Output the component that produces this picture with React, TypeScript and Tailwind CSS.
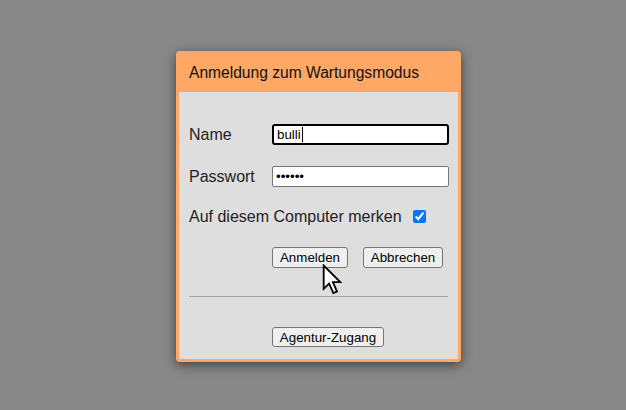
export default function App() {
  return (
    <div
      className="relative min-h-[410px] w-full bg-[#888888] pl-[176px] pt-[51px]"
      style={{ fontFamily: '"Liberation Sans", Arial, sans-serif' }}
    >
      {/* Dialog */}
      <div className="w-[285px] overflow-hidden rounded-[4px] border-[3px] border-[#ffa866] shadow-[0_3px_12px_rgba(0,0,0,0.55)]">
        {/* Header */}
        <div className="flex h-[38px] items-center bg-[#ffa866] pl-[10px] text-[15.6px] text-[#111]">
          Anmeldung zum Wartungsmodus
        </div>

        {/* Body */}
        <div className="bg-[#dedede] pb-[11px] pl-[10px] pr-[9px] pt-[32px] text-[16px] text-[#222]">
          <div className="flex h-[21px] items-center">
            <span className="w-[83px] shrink-0">Name</span>
            <div className="flex h-[21px] w-[177px] shrink-0 items-center rounded-[3px] border-2 border-black bg-white pl-[3px] text-[13.33px] text-black">
              bulli
              <span className="ml-px h-[15px] w-px bg-black" />
            </div>
          </div>

          <div className="mt-[21px] flex h-[21px] items-center">
            <span className="w-[83px] shrink-0">Passwort</span>
            <input
              type="password"
              readOnly
              value="xxxxxx"
              className="h-[21px] w-[177px] shrink-0 rounded-[2px] border border-[#767676] bg-white px-[3px] text-[13.33px] text-black outline-none"
            />
          </div>

          <div className="mt-[19px] flex h-[21px] items-center">
            <span>Auf diesem Computer merken</span>
            <input type="checkbox" checked readOnly className="ml-[11px] h-[13px] w-[13px]" />
          </div>

          <div className="mt-[20px] flex pl-[83px] text-[13.33px] text-black">
            <button className="h-[21px] w-[76px] rounded-[3px] border border-[#767676] bg-[#efefef]">
              Anmelden
            </button>
            <button className="ml-[15px] h-[21px] w-[80px] rounded-[3px] border border-[#767676] bg-[#efefef]">
              Abbrechen
            </button>
          </div>

          <div className="mt-[28px] mr-px h-px bg-[#a3a3a3]" />

          <div className="mt-[30px] pl-[83px] text-[13.33px] text-black">
            <button className="h-[20px] w-[112px] rounded-[3px] border border-[#767676] bg-[#efefef]">
              Agentur-Zugang
            </button>
          </div>
        </div>
      </div>

      {/* Mouse pointer */}
      <svg
        className="absolute left-[322px] top-[264px]"
        width="20"
        height="31"
        viewBox="0 0 13 20.5"
      >
        <path
          d="M1 1 V16.5 L4.6 13 L7.4 19.2 L9.8 18.2 L7.1 12 H12 Z"
          fill="#fff"
          stroke="#000"
          strokeWidth="1.2"
          strokeLinejoin="miter"
        />
      </svg>
    </div>
  );
}
